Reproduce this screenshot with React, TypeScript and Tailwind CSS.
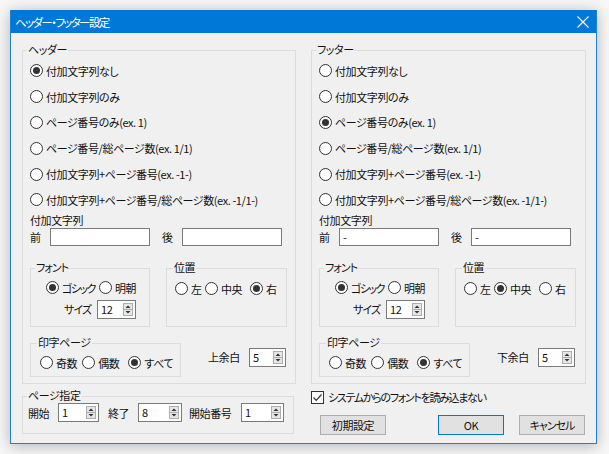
import React from "react";

function Radio({ checked }: { checked?: boolean }) {
  return (
    <span className="flex h-[13px] w-[13px] shrink-0 items-center justify-center rounded-full border border-[#333333] bg-white">
      {checked && <span className="h-[7px] w-[7px] rounded-full bg-[#333333]" />}
    </span>
  );
}

function RadioItem({
  checked,
  children,
  className = "",
  textClass = "",
}: {
  checked?: boolean;
  children: React.ReactNode;
  className?: string;
  textClass?: string;
}) {
  return (
    <div className={`flex shrink-0 items-center ${className}`}>
      <Radio checked={checked} />
      <span className={`ml-[3px] whitespace-nowrap ${textClass}`}>{children}</span>
    </div>
  );
}

function Spinner() {
  return (
    <svg width="10" height="13" viewBox="0 0 10 13" className="mr-[2px] shrink-0">
      <rect x="0.5" y="0.5" width="9" height="12" fill="#e6e6e6" stroke="#adadad" />
      <line x1="1" y1="6.5" x2="9" y2="6.5" stroke="#adadad" />
      <polygon points="5,2.5 7.5,5 2.5,5" fill="#333" />
      <polygon points="2.5,8 7.5,8 5,10.5" fill="#333" />
    </svg>
  );
}

function Spin({ value, className = "" }: { value: string; className?: string }) {
  return (
    <div className={`flex h-[19px] shrink-0 items-center border border-[#7a7a7a] bg-white ${className}`}>
      <span className="flex-1 pl-[3px] leading-none">{value}</span>
      <Spinner />
    </div>
  );
}

function Group({
  label,
  className = "",
  labelClass = "left-[4px]",
  children,
}: {
  label: string;
  className?: string;
  labelClass?: string;
  children?: React.ReactNode;
}) {
  return (
    <div className={`relative shrink-0 border border-[#dcdcdc] ${className}`}>
      <span className={`absolute top-[-9px] bg-[#f0f0f0] px-[1px] leading-[14px] ${labelClass}`}>{label}</span>
      {children}
    </div>
  );
}

const OPTIONS = [
  "付加文字列なし",
  "付加文字列のみ",
  "ページ番号のみ(ex. 1)",
  "ページ番号/総ページ数(ex. 1/1)",
  "付加文字列+ページ番号(ex. -1-)",
  "付加文字列+ページ番号/総ページ数(ex. -1/1-)",
];

function Section({
  label,
  selected,
  value,
  pos,
  marginLabel,
  className = "",
}: {
  label: string;
  selected: number;
  value: string;
  pos: number;
  marginLabel: string;
  className?: string;
}) {
  return (
    <Group label={label} className={`h-[334px] ${className}`}>
      <div className="pl-[7px] pt-[7px]">
        {OPTIONS.map((o, i) => (
          <div key={o} className="flex h-[25.8px] items-center">
            <RadioItem checked={i === selected}>{o}</RadioItem>
          </div>
        ))}
        <div className="flex h-[15px] items-center">付加文字列</div>
        <div className="flex h-[18px] items-center">
          <span className="w-[20px]">前</span>
          <div className="flex h-[18px] w-[100px] items-center border border-[#7a7a7a] bg-white pl-[3px]">{value}</div>
          <span className="ml-[12px] w-[20px]">後</span>
          <div className="flex h-[18px] w-[100px] items-center border border-[#7a7a7a] bg-white pl-[3px]">{value}</div>
        </div>
        <div className="mt-[22px] flex gap-[16px]">
          <Group label="フォント" className="h-[59px] w-[120px]" labelClass="left-[4px] tracking-[-1px]">
            <div className="mt-[12px] flex h-[14px] items-center pl-[15px]">
              <RadioItem checked textClass="tracking-[-1.5px]">
                ゴシック
              </RadioItem>
              <RadioItem className="ml-[4px]">明朝</RadioItem>
            </div>
            <div className="mt-[5px] flex items-center pl-[33px]">
              <span className="w-[33px] tracking-[-1px]">サイズ</span>
              <Spin value="12" className="w-[39px]" />
            </div>
          </Group>
          <Group label="位置" className="h-[59px] w-[121px]" labelClass="left-[6px]">
            <div className="mt-[13px] flex h-[14px] items-center pl-[8px]">
              <RadioItem checked={pos === 0} className="w-[30px]">左</RadioItem>
              <RadioItem checked={pos === 1} className="w-[45px]">中央</RadioItem>
              <RadioItem checked={pos === 2}>右</RadioItem>
            </div>
          </Group>
        </div>
        <div className="mt-[16px] flex items-start">
          <Group label="印字ページ" className="h-[34px] w-[151px]" labelClass="left-[6px]">
            <div className="mt-[12px] flex h-[14px] items-center pl-[9px]">
              <RadioItem>奇数</RadioItem>
              <RadioItem className="ml-[5px]">偶数</RadioItem>
              <RadioItem className="ml-[9px]" checked>すべて</RadioItem>
            </div>
          </Group>
          <div className="ml-[27px] mt-[5px] flex items-center">
            <span className="w-[41px]">{marginLabel}</span>
            <Spin value="5" className="w-[37px]" />
          </div>
        </div>
      </div>
    </Group>
  );
}

function Button({ children, className = "" }: { children: React.ReactNode; className?: string }) {
  return (
    <div className={`flex h-[20px] w-[66px] items-center justify-center border bg-[#e1e1e1] ${className}`}>{children}</div>
  );
}

export default function App() {
  return (
    <div className="h-[454px] w-[609px] bg-[#f7f7f7] pl-[10px] pt-[10px] font-['Noto_Sans_CJK_JP',sans-serif] text-[11px] leading-[14px] tracking-[-0.4px] text-[#111111] [font-feature-settings:'palt']">
      <div className="h-[434px] w-[587px] border border-[#1a82d6] bg-[#f0f0f0] shadow-[0_2px_14px_rgba(0,0,0,0.28)]">
        <div className="-mt-px flex h-[23px] items-center justify-between bg-[#0078d7] pl-[4px] pr-[7px]">
          <span className="text-[11.5px] tracking-[-1.6px] text-white">ヘッダー・フッター設定</span>
          <svg width="12" height="12" viewBox="0 0 12 12">
            <path d="M0.5 0.5 L11.5 11.5 M11.5 0.5 L0.5 11.5" stroke="white" strokeWidth="1.1" />
          </svg>
        </div>
        <div className="flex gap-[15px] pl-[11px] pt-[17px]">
          <div className="flex w-[274px] flex-col">
            <Section label="ヘッダー" selected={0} value="" pos={2} marginLabel="上余白" className="w-[274px]" />
            <Group label="ページ指定" className="mt-[12px] h-[38px] w-[272px]">
              <div className="flex items-center pl-[5px] pt-[6px]">
                <span className="w-[30px]">開始</span>
                <Spin value="1" className="w-[41px]" />
                <span className="ml-[9px] w-[30px]">終了</span>
                <Spin value="8" className="w-[44px]" />
                <span className="ml-[7px] w-[52px]">開始番号</span>
                <Spin value="1" className="w-[43px]" />
              </div>
            </Group>
          </div>
          <div className="flex w-[275px] flex-col">
            <Section label="フッター" selected={2} value="-" pos={1} marginLabel="下余白" className="w-[275px]" />
            <div className="mt-[6px] flex h-[14px] items-center">
              <span className="flex h-[13px] w-[13px] items-center justify-center border border-[#333333] bg-white">
                <svg width="11" height="11" viewBox="0 0 11 11">
                  <path d="M1.5 5.5 L4.2 8.3 L9.5 2.5" fill="none" stroke="#333" strokeWidth="1.2" />
                </svg>
              </span>
              <span className="ml-[4px] tracking-[-1.3px]">システムからのフォントを読み込まない</span>
            </div>
            <div className="mt-[11px] flex">
              <Button className="ml-[9px] border-[#adadad]">初期設定</Button>
              <Button className="ml-[52px] border-[#0078d7]">OK</Button>
              <Button className="ml-[15px] border-[#adadad] tracking-[-1px]">キャンセル</Button>
            </div>
          </div>
        </div>
      </div>
    </div>
  );
}
